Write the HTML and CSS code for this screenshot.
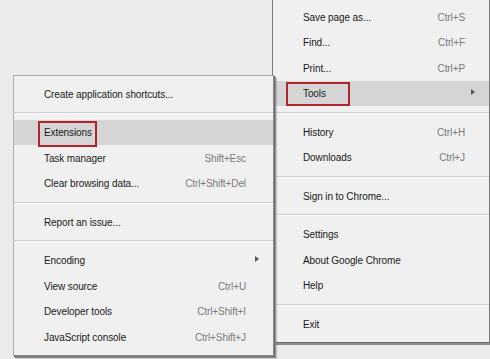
FILE: index.html
```html
<!DOCTYPE html>
<html>
<head>
<meta charset="utf-8">
<link rel="stylesheet" href="styles.css">
</head>
<body>
<div class="screen">
  <div class="menu main">
    <div class="item"><span class="label">Save page as...</span><span class="key">Ctrl+S</span></div>
    <div class="item"><span class="label">Find...</span><span class="key">Ctrl+F</span></div>
    <div class="item"><span class="label">Print...</span><span class="key">Ctrl+P</span></div>
    <div class="item active"><span class="label">Tools</span><span class="arrow"></span><span class="mark mark-tools"></span></div>
    <div class="sep"></div>
    <div class="item"><span class="label">History</span><span class="key">Ctrl+H</span></div>
    <div class="item"><span class="label">Downloads</span><span class="key">Ctrl+J</span></div>
    <div class="sep"></div>
    <div class="item"><span class="label">Sign in to Chrome...</span></div>
    <div class="sep"></div>
    <div class="item"><span class="label">Settings</span></div>
    <div class="item"><span class="label">About Google Chrome</span></div>
    <div class="item"><span class="label">Help</span></div>
    <div class="sep"></div>
    <div class="item"><span class="label">Exit</span></div>
  </div>

  <div class="menu sub">
    <div class="item"><span class="label">Create application shortcuts...</span></div>
    <div class="sep"></div>
    <div class="item active"><span class="label">Extensions</span><span class="mark mark-ext"></span></div>
    <div class="item"><span class="label">Task manager</span><span class="key">Shift+Esc</span></div>
    <div class="item"><span class="label">Clear browsing data...</span><span class="key">Ctrl+Shift+Del</span></div>
    <div class="sep"></div>
    <div class="item"><span class="label">Report an issue...</span></div>
    <div class="sep"></div>
    <div class="item"><span class="label">Encoding</span><span class="arrow"></span></div>
    <div class="item"><span class="label">View source</span><span class="key">Ctrl+U</span></div>
    <div class="item"><span class="label">Developer tools</span><span class="key">Ctrl+Shift+I</span></div>
    <div class="item"><span class="label">JavaScript console</span><span class="key">Ctrl+Shift+J</span></div>
  </div>
</div>
</body>
</html>
```

FILE: styles.css
```css
html, body {
  margin: 0;
  padding: 0;
  background: #ebebeb;
}
body {
  width: 490px;
  height: 359px;
  overflow: hidden;
  font-family: "Liberation Sans", Arial, sans-serif;
  font-size: 10px;
  letter-spacing: -0.1px;
  color: #1a1a1a;
}
.screen {
  position: relative;
  width: 490px;
  height: 359px;
}
.menu {
  background: #f0f0f0;
  box-sizing: border-box;
}
.main {
  margin-left: 272px;
  width: 218px;
  padding: 4px 0 5px;
  border-left: 1px solid #7a7a7a;
  border-right: 1px solid #7a7a7a;
  border-bottom: 1px solid #6a6a6a;
  box-shadow: 0 2px 0 #8e8e8e;
}
.sub {
  position: absolute;
  left: 13px;
  top: 75px;
  width: 261px;
  padding: 5px 0 5px;
  border: 1px solid #8a8a8a;
  border-top-color: #a8a8a8;
  border-left-color: #b0b0b0;
  box-shadow: 1px 1px 0 #707070, 2px 2px 0 #8e8e8e, 3px 3px 1px rgba(0,0,0,0.15);
}
.item {
  position: relative;
  height: 25.5px;
  display: flex;
  align-items: center;
  justify-content: space-between;
  box-sizing: border-box;
  padding-top: 1px;
}
.main .item {
  padding-left: 30px;
  padding-right: 24px;
}
.sub .item {
  padding-left: 30px;
  padding-right: 27px;
}
.item.active {
  background: #d5d5d5;
}
.key {
  color: #7a7a7a;
}
.arrow {
  width: 0;
  height: 0;
  border-top: 3px solid transparent;
  border-bottom: 3px solid transparent;
  border-left: 4px solid #555;
  margin-right: -10px;
  margin-top: -4px;
}
.sub .arrow {
  margin-right: -13px;
}
.sep {
  height: 1px;
  margin: 5.5px 0;
  background: #cdcdcd;
  border-bottom: 1px solid #fafafa;
}
.mark {
  position: absolute;
  border: 2px solid #b1262c;
  box-sizing: border-box;
}
.mark-tools {
  left: 13px;
  top: 1.5px;
  width: 64px;
  height: 24px;
}
.mark-ext {
  left: 24px;
  top: 1.5px;
  width: 59px;
  height: 26px;
}
```
